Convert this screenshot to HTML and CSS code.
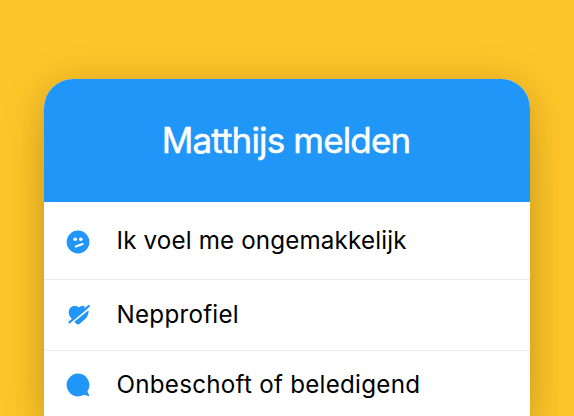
FILE: index.html
```html
<!DOCTYPE html>
<html lang="nl">
<head>
    <meta charset="UTF-8">
    <meta name="viewport" content="width=device-width, initial-scale=1.0">
    <title>Matthijs melden</title>
    <link rel="stylesheet" href="styles.css">
</head>
<body>
    <div class="report-card">
        <div class="report-header">
            <h1>Matthijs melden</h1>
        </div>
        <ul class="reason-list">
            <li class="reason reason-first">
                <svg class="icon" viewBox="0 0 24 24">
                    <circle cx="12" cy="12" r="11.4" fill="#2196f9"/>
                    <circle cx="9.2" cy="9.2" r="1.8" fill="#fff"/>
                    <circle cx="14.8" cy="9.2" r="1.8" fill="#fff"/>
                    <path d="M9.8 16.6L16.6 14" stroke="#fff" stroke-width="2.1" stroke-linecap="round"/>
                </svg>
                <span class="label label-uneasy">Ik voel me ongemakkelijk</span>
            </li>
            <li class="reason">
                <svg class="icon" viewBox="0 0 24 24">
                    <path d="M12.8 4.4C10.5 2.4 6.4 2.5 4.2 5C2 7.8 2.4 11.5 4.6 14.4L10.3 20.8Q12.1 22 13.8 20.8L20 15.2C22.4 12.4 23 9 22.2 6.4C20.6 2.8 15.8 2 12.8 4.4Z" fill="#2196f9"/>
                    <path d="M4 21.2L25 4" stroke="#fff" stroke-width="1.7"/>
                    <path d="M18.2 5.5L24 .6" stroke="#fff" stroke-width="1.4"/>
                    <path d="M3.4 19.4L22.8 3" stroke="#2196f9" stroke-width="2.2" stroke-linecap="round"/>
                </svg>
                <span class="label">Nepprofiel</span>
            </li>
            <li class="reason reason-last">
                <svg class="icon" viewBox="0 0 24 24">
                    <path d="M12 .6A11.4 11.4 0 1 0 18 21.7L23 23.3Q23.5 23 23.2 22.3L21.4 18.4A11.4 11.4 0 0 0 12 .6Z" fill="#2196f9"/>
                </svg>
                <span class="label">Onbeschoft of beledigend</span>
            </li>
        </ul>
    </div>
</body>
</html>
```
FILE: styles.css
```css
* {
    margin: 0;
    padding: 0;
    box-sizing: border-box;
}

body {
    height: 416px;
    padding: 79px 44px 0;
    overflow: hidden;
    background-color: #ffc629;
    font-family: Inter, 'Liberation Sans', sans-serif;
}

.report-card {
    height: 337px;
    border-radius: 29px 29px 0 0;
    overflow: hidden;
    background-color: white;
    box-shadow: 0 6px 40px rgba(0, 0, 0, 0.21), 0 60px 40px rgba(0, 0, 0, 0.05);
}

.report-header {
    height: 123px;
    padding: 0 2px 2px 0;
    display: flex;
    align-items: center;
    justify-content: center;
    background-color: #2196f9;
    color: white;
}

.report-header h1 {
    font-size: 35px;
    font-weight: 400;
    line-height: 42px;
    letter-spacing: -0.85px;
    -webkit-text-stroke: 0.5px white;
    white-space: nowrap;
}

.reason-list {
    list-style: none;
}

.reason {
    height: 71px;
    padding-left: 22px;
    display: flex;
    align-items: center;
    border-bottom: 1px solid #ececec;
}

.reason-first {
    height: 78px;
    padding-top: 2px;
}

.reason-last {
    height: 64px;
    padding-top: 3px;
    border-bottom: none;
}

.icon {
    width: 24px;
    height: 24px;
    margin-right: 26.5px;
    flex: none;
}

.label {
    font-size: 24.2px;
    font-weight: 400;
    line-height: 30px;
    letter-spacing: 0.25px;
    color: black;
    white-space: nowrap;
}

.label-uneasy {
    padding-bottom: 2px;
    letter-spacing: 0.15px;
}
```
